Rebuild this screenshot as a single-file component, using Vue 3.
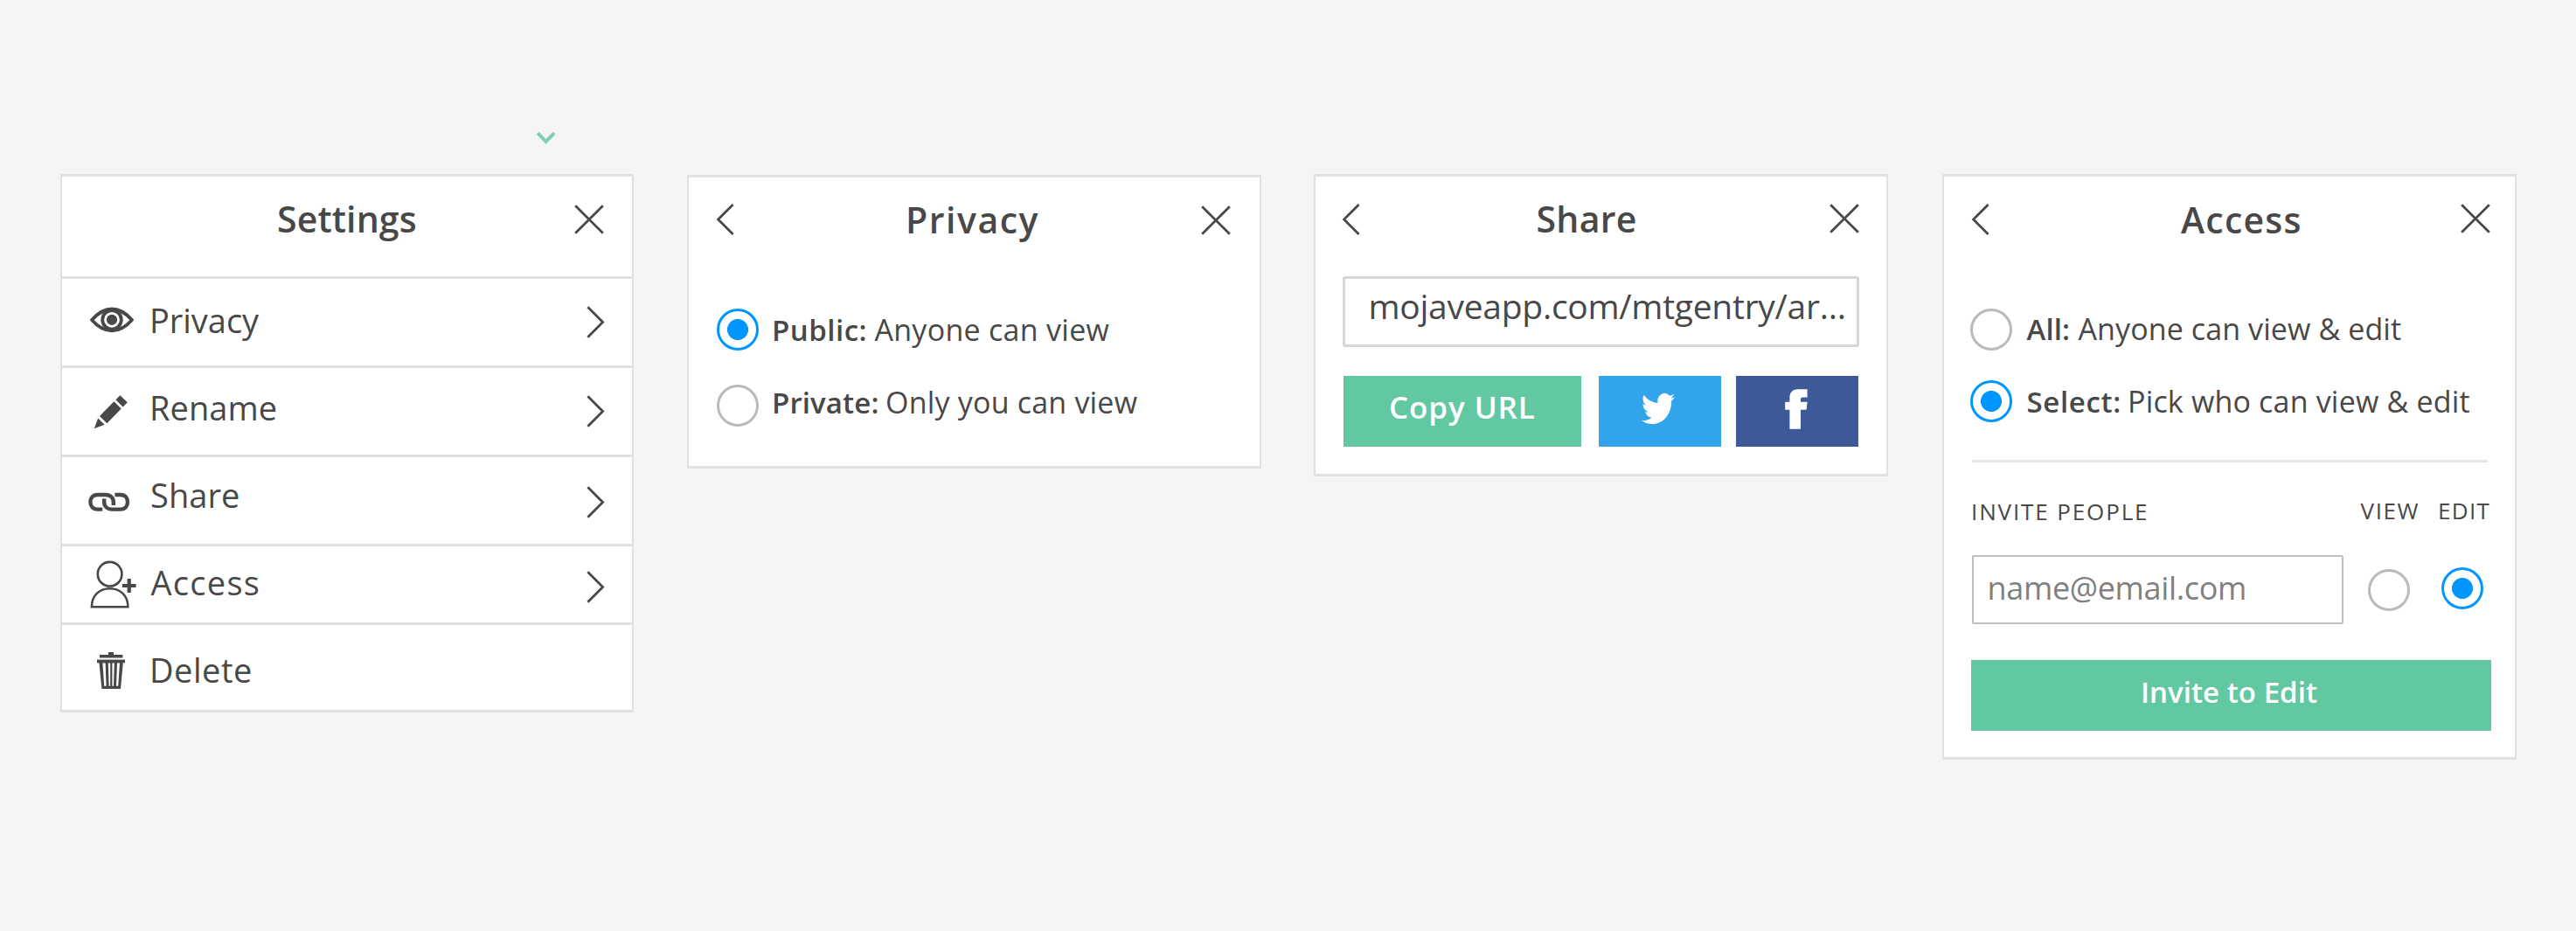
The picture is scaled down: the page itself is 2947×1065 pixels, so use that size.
<script setup>
const menu = [
  { id: 'privacy', label: 'Privacy', arrow: true },
  { id: 'rename', label: 'Rename', arrow: true },
  { id: 'share', label: 'Share', arrow: true },
  { id: 'access', label: 'Access', arrow: true },
  { id: 'delete', label: 'Delete', arrow: false },
]
</script>

<template>
  <div class="page">
    <div class="top">
      <svg class="caret" width="24" height="16" viewBox="0 0 24 16">
        <path d="M2 2.2 11.6 11.8 21.2 2.2" fill="none" stroke="#7fcfb2" stroke-width="4" />
      </svg>
    </div>

    <main class="panels">
      <!-- Settings -->
      <section class="panel settings">
        <header class="head">
          <div class="lead"></div>
          <h2 class="title">Settings</h2>
          <svg class="close" viewBox="0 0 34 34"><path d="M1.2 1.2 32.8 32.8M32.8 1.2 1.2 32.8" /></svg>
        </header>
        <ul class="menu">
          <li v-for="item in menu" :key="item.id" class="item" :class="item.id">
            <svg v-if="item.id === 'privacy'" class="icon" width="100" height="99" viewBox="71 319 100 99">
              <path d="M105 366C113 357 120 353.5 128 353.5S143 357 151 366C143 375 136 378.3 128 378.3S113 375 105 366Z" fill="#fff" stroke="#484848" stroke-width="3.8" stroke-linejoin="round" />
              <circle cx="128" cy="365.8" r="10.8" fill="#fff" stroke="#484848" stroke-width="3.8" />
              <circle cx="128" cy="365.8" r="6.1" fill="#484848" />
            </svg>
            <svg v-else-if="item.id === 'rename'" class="icon" width="100" height="99" viewBox="71 421 100 99">
              <g fill="#484848">
                <path d="M137.4 452.2 145.8 460.2 140.6 465.4 132.4 457.2Z" />
                <path d="M130.4 459.3 138.7 467.5 122.4 484.3 114 476Z" />
                <path d="M112.2 478.5 119.6 485.8 107.8 490.3Z" />
              </g>
            </svg>
            <svg v-else-if="item.id === 'share'" class="icon" width="100" height="99" viewBox="71 523 100 99">
              <g fill="none" stroke="#484848" stroke-width="4.4">
                <path d="M117.2 582.6H111.5C106.5 582.6 103.4 579.2 103.4 574.3S106.5 566 111.5 566H120.5C126.4 566 129.8 569.6 129.8 574.2V578" />
                <path d="M131.4 566H138C143 566 146 569.4 146 574.3S143 582.6 138 582.6H128.4C122.6 582.6 119.2 579 119.2 574.4V570.6" />
              </g>
            </svg>
            <svg v-else-if="item.id === 'access'" class="icon" width="100" height="87" viewBox="71 625 100 87">
              <g fill="none" stroke="#484848" stroke-width="2.6">
                <circle cx="125.6" cy="656.7" r="13.8" />
                <path d="M104.9 694.2C104.9 681.5 113.5 673.2 125.6 673.2S146.4 681.5 146.4 694.2Z" />
              </g>
              <path d="M139.8 670H155.6M147.7 662V678" stroke="#484848" stroke-width="4.2" />
            </svg>
            <svg v-else class="icon" width="100" height="97" viewBox="71 715 100 97">
              <g fill="#484848">
                <path d="M114 749H124V746H130V749H140.4V752.6H114Z" />
                <path d="M111 754.6H143V758.3H111Z" />
                <path fill-rule="evenodd" d="M113.4 758H140.8L138 788H116.4ZM117.4 758.3 119.2 784.8H121.6L120.6 758.3ZM123.8 758.3 124.6 784.8H126.2V758.3ZM128.4 758.3V784.8H130L130.8 758.3ZM134 758.3 133 784.8H135.2L137 758.3Z" />
              </g>
            </svg>
            <span class="label">{{ item.label }}</span>
            <svg v-if="item.arrow" class="chevron" viewBox="0 0 20 37"><path d="M1.4 1.2 18.6 18.5 1.4 35.8" /></svg>
          </li>
        </ul>
      </section>

      <!-- Privacy -->
      <section class="panel privacy-panel">
        <header class="head">
          <div class="lead">
            <svg class="back" viewBox="0 0 20 36"><path d="M18.6 1 1.6 18 18.6 35" /></svg>
          </div>
          <h2 class="title">Privacy</h2>
          <svg class="close" viewBox="0 0 34 34"><path d="M1.2 1.2 32.8 32.8M32.8 1.2 1.2 32.8" /></svg>
        </header>
        <div class="options">
          <div class="option public">
            <i class="radio on"></i>
            <p class="text"><b>Public:</b><span>Anyone can view</span></p>
          </div>
          <div class="option private">
            <i class="radio"></i>
            <p class="text"><b>Private:</b><span>Only you can view</span></p>
          </div>
        </div>
      </section>

      <!-- Share -->
      <section class="panel share-panel">
        <header class="head">
          <div class="lead">
            <svg class="back" viewBox="0 0 20 36"><path d="M18.6 1 1.6 18 18.6 35" /></svg>
          </div>
          <h2 class="title">Share</h2>
          <svg class="close" viewBox="0 0 34 34"><path d="M1.2 1.2 32.8 32.8M32.8 1.2 1.2 32.8" /></svg>
        </header>
        <div class="url">mojaveapp.com/mtgentry/ar...</div>
        <div class="buttons">
          <div class="btn copy"><span>Copy URL</span></div>
          <div class="btn twitter">
            <svg width="38" height="35" viewBox="0 2.25 24 19.5" preserveAspectRatio="none">
              <path fill="#fff" d="M23.953 4.57a10 10 0 01-2.825.775 4.958 4.958 0 002.163-2.723c-.951.555-2.005.959-3.127 1.184a4.92 4.92 0 00-8.384 4.482C7.69 8.095 4.067 6.13 1.64 3.162a4.822 4.822 0 00-.666 2.475c0 1.71.87 3.213 2.188 4.096a4.904 4.904 0 01-2.228-.616v.06a4.923 4.923 0 003.946 4.827 4.996 4.996 0 01-2.212.085 4.936 4.936 0 004.604 3.417 9.867 9.867 0 01-6.102 2.105c-.39 0-.779-.023-1.17-.067a13.995 13.995 0 007.557 2.209c9.053 0 13.998-7.496 13.998-13.985 0-.21 0-.42-.015-.63A9.935 9.935 0 0024 4.59z" />
            </svg>
          </div>
          <div class="btn facebook">
            <svg width="26" height="46" viewBox="0 0 26 46">
              <path fill="#fff" d="M5.4 45.7V23.8H.2V14.8H5.4V10.4C5.4 3.4 9 .3 15.8.3H25.6V9.4H20.6C18.6 9.4 18 10.3 18 12V14.8H25.6L24.6 23.8H18V45.7Z" />
            </svg>
          </div>
        </div>
      </section>

      <!-- Access -->
      <section class="panel access-panel">
        <header class="head">
          <div class="lead">
            <svg class="back" viewBox="0 0 20 36"><path d="M18.6 1 1.6 18 18.6 35" /></svg>
          </div>
          <h2 class="title">Access</h2>
          <svg class="close" viewBox="0 0 34 34"><path d="M1.2 1.2 32.8 32.8M32.8 1.2 1.2 32.8" /></svg>
        </header>
        <div class="options">
          <div class="option all">
            <i class="radio"></i>
            <p class="text"><b>All:</b><span>Anyone can view &amp; edit</span></p>
          </div>
          <div class="option select">
            <i class="radio on"></i>
            <p class="text"><b>Select:</b><span>Pick who can view &amp; edit</span></p>
          </div>
        </div>
        <div class="rule"></div>
        <div class="labels">
          <span class="invite-label">INVITE PEOPLE</span>
          <span class="view-label">VIEW</span>
          <span class="edit-label">EDIT</span>
        </div>
        <div class="invite">
          <div class="email">name@email.com</div>
          <i class="radio"></i>
          <i class="radio on"></i>
        </div>
        <div class="btn submit"><span>Invite to Edit</span></div>
      </section>
    </main>
  </div>
</template>

<style>
body { background: #f5f5f5; }
</style>

<style scoped>
.page { width: 2947px; height: 1065px; background: #f5f5f5; color: #484848; font-family: "Open Sans", Lato, sans-serif; white-space: nowrap; overflow: hidden; }
.page * { box-sizing: border-box; }
svg { display: block; flex: none; overflow: visible; }
.top { height: 199px; display: flex; padding: 150px 0 0 612.5px; }
.panels { display: flex; align-items: flex-start; padding-left: 69px; }
.panel { width: 657px; flex: none; background: #fff; border: solid #e1e1e1; border-width: 3px 2px; }
.settings { width: 656px; height: 616px; margin-right: 61px; }
.privacy-panel { height: 336px; margin: 1px 60px 0 0; }
.share-panel { height: 346px; margin-right: 62px; }
.access-panel { height: 670px; }

.head { display: flex; align-items: flex-start; height: 114px; }
.lead { flex: none; width: 246px; }
.title { margin: 18px 0 0; font-size: 41px; line-height: 60px; font-weight: 600; letter-spacing: 0.12px; }
.close, .back, .chevron { fill: none; stroke: #484848; stroke-width: 2.8px; }
.close { width: 34px; height: 34px; margin: 32px 32px 0 auto; }
.back { width: 20px; height: 36px; margin: 31px 0 0 30.5px; }
.chevron { width: 20px; height: 37px; margin: 31px 32px 0 auto; }
.privacy-panel .lead { width: 248px; }
.privacy-panel .title { letter-spacing: 1.54px; }
.privacy-panel .back { margin: 29.5px 0 0 31.5px; }
.privacy-panel .close { margin-right: 33px; }
.share-panel .lead { width: 252.5px; }
.share-panel .title { letter-spacing: 0.32px; }
.share-panel .close { margin: 31px 31px 0 auto; }
.access-panel .lead { width: 271px; }
.access-panel .title { margin-top: 19px; letter-spacing: 1.23px; }
.access-panel .back { margin-left: 32px; }
.access-panel .close { margin: 31px 28px 0 auto; }

.menu { list-style: none; margin: 0; padding: 0; }
.item { display: flex; align-items: flex-start; height: 102px; border-top: 3px solid #e0e0e0; }
.item.access { height: 90px; }
.item.delete { height: 100px; }
.label { font-size: 38px; line-height: 60px; }
.privacy .label { margin-top: 17px; letter-spacing: -0.04px; }
.rename .label { margin-top: 15px; letter-spacing: 0.05px; }
.share .label { margin: 13px 0 0 1px; letter-spacing: 0.04px; }
.access .label { margin: 11px 0 0 1.5px; letter-spacing: 1.29px; }
.delete .label { margin-top: 21px; letter-spacing: 0.53px; }
.share .chevron { margin-top: 32.5px; }
.access .chevron { margin-top: 27.5px; }

.options { display: flex; flex-direction: column; padding: 36px 0 0 32px; }
.option { display: flex; align-items: flex-start; height: 48px; margin-bottom: 34.5px; }
.radio { flex: none; width: 48px; height: 48px; border: 3px solid #bababa; border-radius: 50%; background: #fff; }
.radio.on { border-color: #0096ff; background: radial-gradient(circle, #0096ff 11.6px, #fff 12.4px); }
.text { display: flex; align-items: baseline; margin: 0 0 0 15px; font-size: 34px; line-height: 48px; }
.text b { font-size: 33px; font-weight: 600; }
.public b { width: 117.4px; letter-spacing: 0.49px; }
.public span { letter-spacing: 0.29px; }
.private b { width: 130px; letter-spacing: 0.12px; }
.private span { letter-spacing: 0.2px; }
.private .radio { margin-top: 4px; }
.access-panel .options { height: 210px; padding: 36px 0 0 30px; }
.access-panel .option { margin-bottom: 35px; }
.access-panel .text { margin-left: 16.5px; }
.all .radio { margin-top: 1px; }
.all b { width: 59px; letter-spacing: 0.08px; }
.all span { letter-spacing: 0.1px; }
.select b { width: 115.5px; letter-spacing: 0.67px; }
.select span { letter-spacing: 0.18px; }

.url { width: 591px; height: 81px; margin-left: 30.5px; padding: 1px 0 0 27px; border: 3px solid #d6d6d6; border-radius: 3px; font-size: 39px; line-height: 60px; letter-spacing: -0.27px; }
.buttons { display: flex; margin: 33px 0 0 32px; }
.btn { display: flex; align-items: flex-start; height: 81px; color: #fff; font-size: 35px; line-height: 60px; font-weight: 600; }
.copy { width: 272px; padding: 6px 0 0 52px; background: #62c8a2; letter-spacing: 0.9px; }
.twitter { width: 140px; margin-left: 20px; padding: 20px 0 0 49px; background: #30a5ec; }
.facebook { width: 140px; margin-left: 17px; padding: 14.5px 0 0 55.5px; background: #3e5997; }

.rule { width: 590px; height: 3px; margin-left: 31.5px; background: #e6e6e6; }
.labels { display: flex; align-items: flex-start; height: 106px; padding-left: 31px; font-size: 26px; line-height: 40px; }
.labels span { margin-top: 35px; }
.labels .invite-label { width: 445.5px; margin-top: 36px; letter-spacing: 1.87px; }
.view-label { width: 88.5px; letter-spacing: 1.63px; }
.edit-label { letter-spacing: 1.34px; }
.invite { display: flex; align-items: flex-start; height: 79px; padding-left: 32px; }
.email { width: 425px; height: 79px; padding: 11px 0 0 15.5px; border: 2px solid #bfbfbf; border-radius: 2px; font-size: 36px; line-height: 50px; letter-spacing: -0.34px; color: #808080; }
.invite .radio { margin: 16px 0 0 28px; }
.invite .radio.on { margin: 14px 0 0 36px; }
.submit { width: 595px; margin: 41px 0 0 31px; padding: 7px 0 0 194px; background: #62c8a2; font-size: 33px; letter-spacing: 0.04px; }
</style>
